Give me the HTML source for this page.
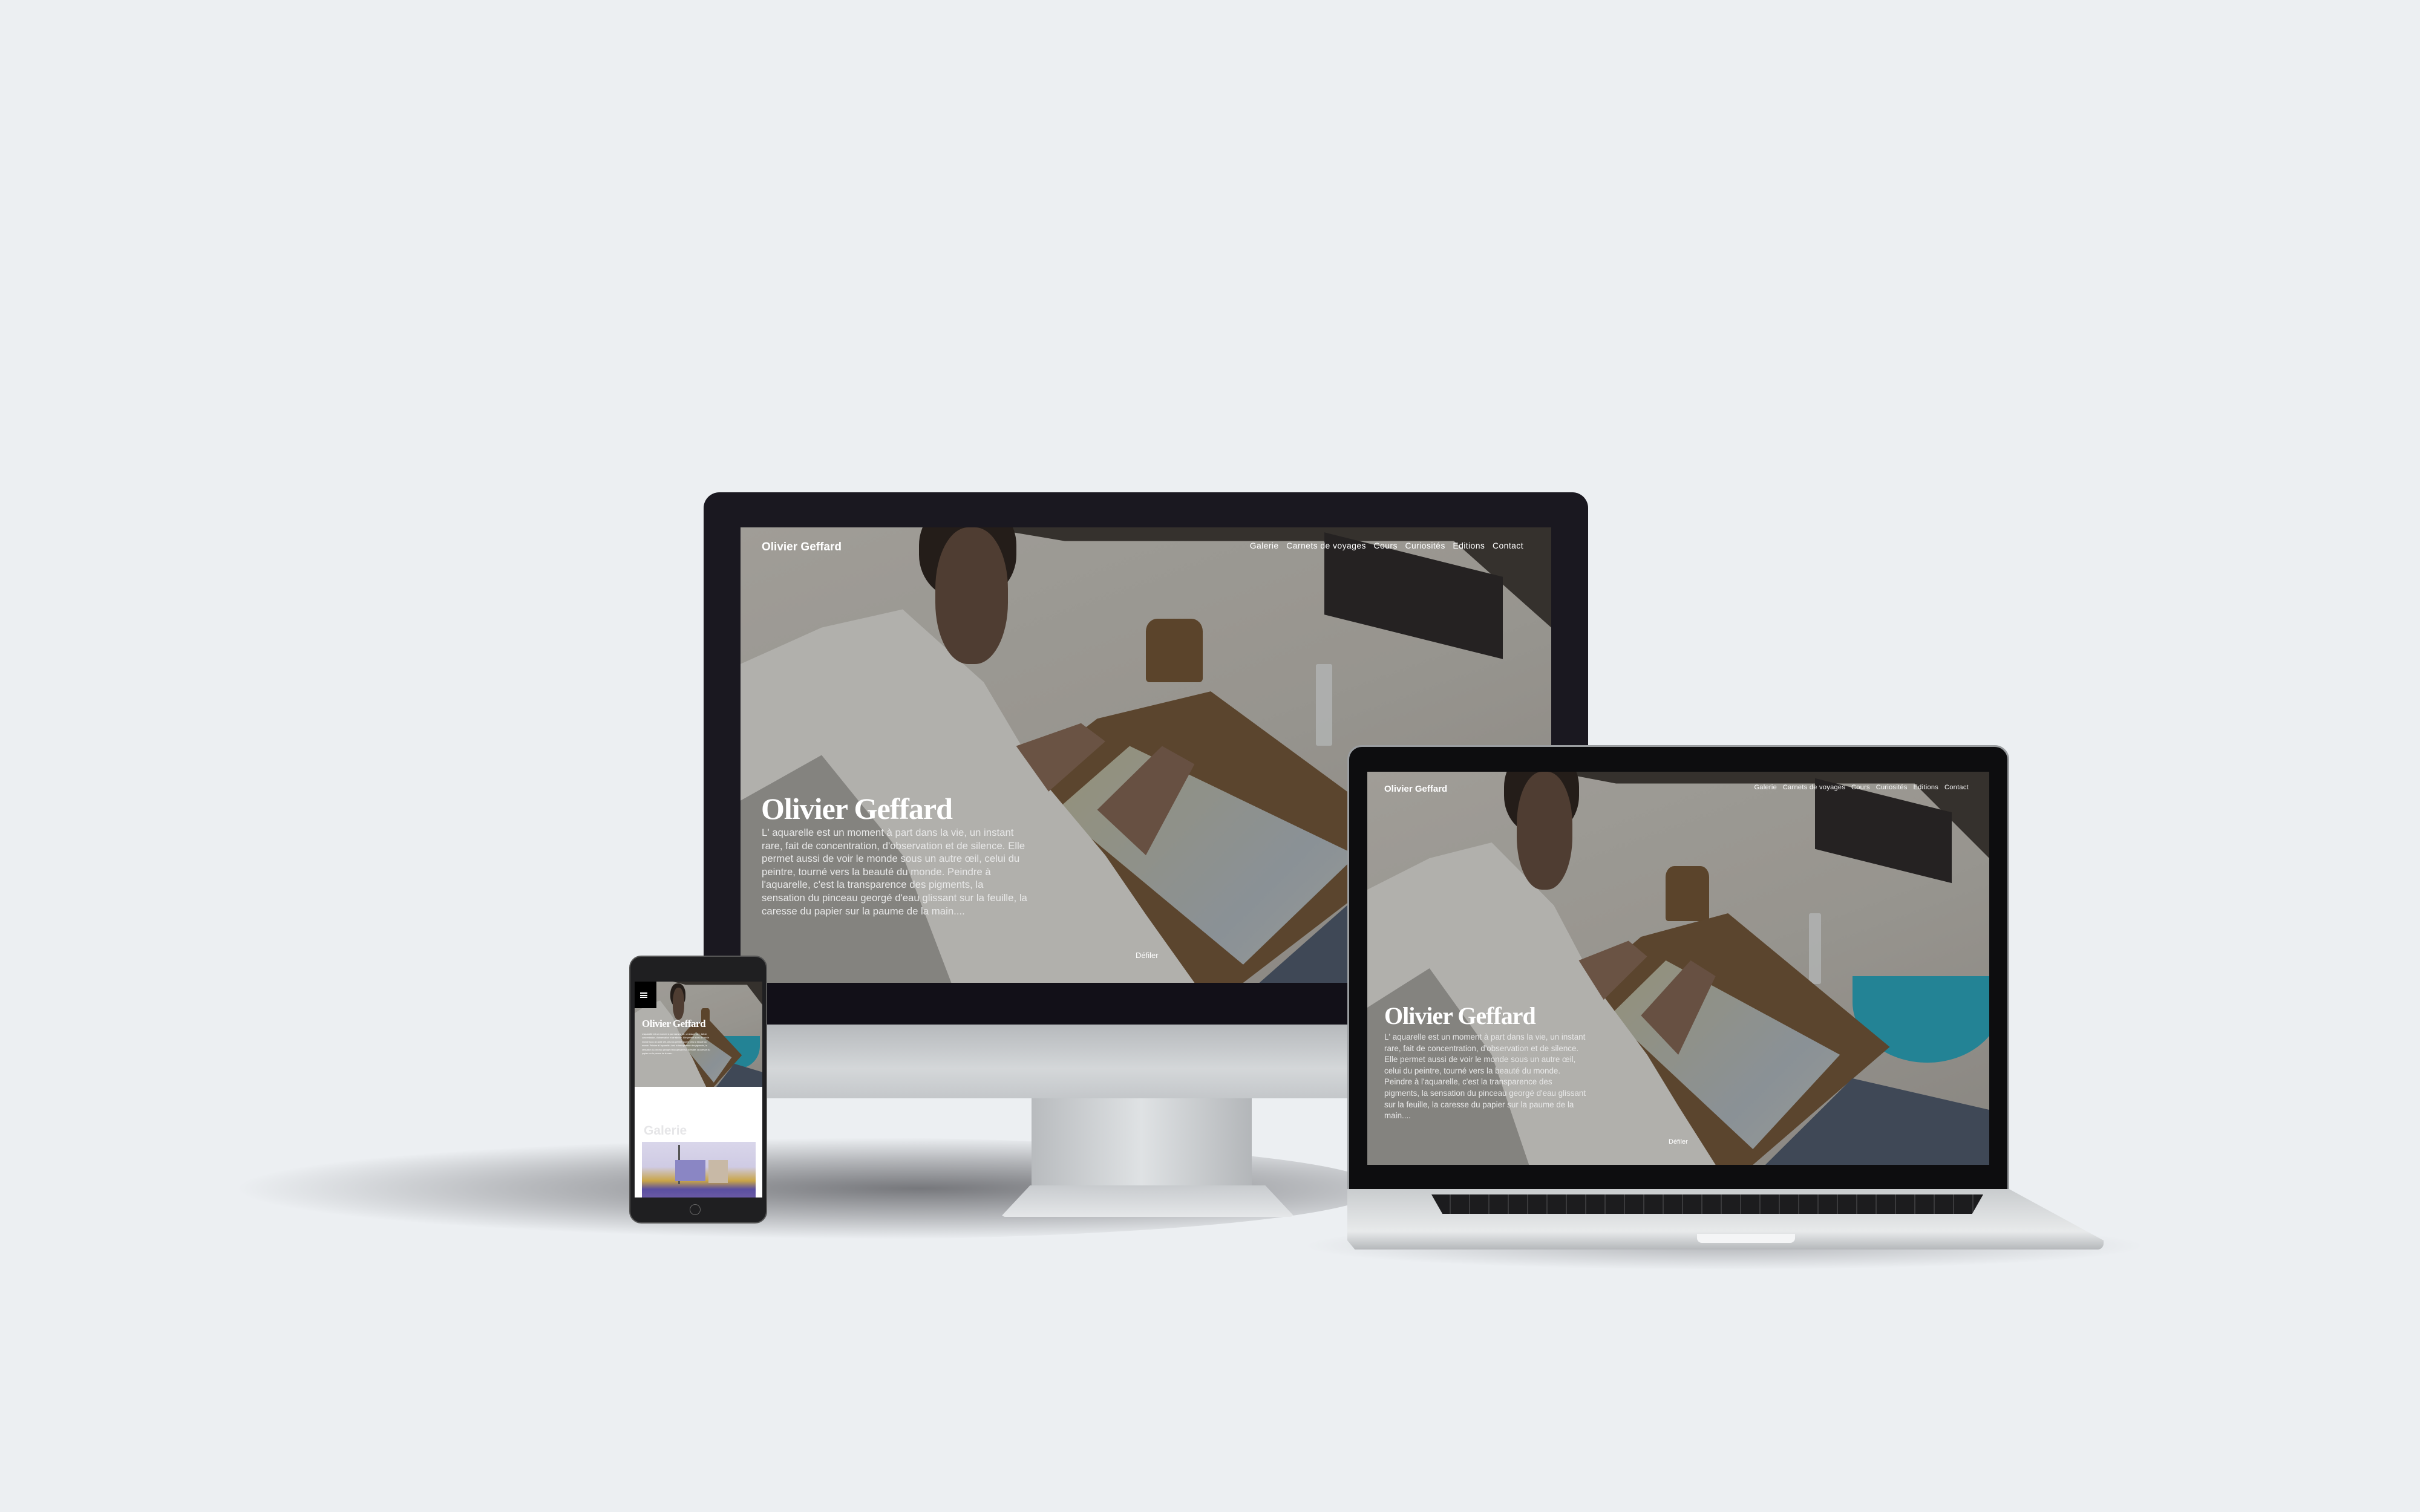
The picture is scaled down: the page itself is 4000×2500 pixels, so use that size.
<!DOCTYPE html>
<html><head><meta charset="utf-8"><style>
*{margin:0;padding:0;box-sizing:border-box}
body{width:4000px;height:2500px;background:#eceff2;position:relative;overflow:hidden;font-family:"Liberation Sans",sans-serif}
.abs{position:absolute}
.scene{position:absolute;overflow:hidden;background:linear-gradient(160deg,#bcb9b2 0%,#b2afa8 50%,#a19e98 100%)}
.scene>div{position:absolute}
.wall{left:0;top:0;width:100%;height:100%;background:#3f3a35;clip-path:polygon(0 0,100% 0,100% 22%,88% 3%,40% 3%,30% 0)}
.chair{left:72%;top:6%;width:22%;height:18%;background:#2c2928;transform:skewY(14deg)}
.shirt{left:0;top:0;width:100%;height:100%;background:#d0cfcb;clip-path:polygon(0 30%,10% 22%,20% 18%,30% 34%,37% 55%,45% 72%,50% 85%,56% 100%,0 100%)}
.shirtsh{left:0;top:0;width:100%;height:100%;background:#9c9a96;clip-path:polygon(0 60%,10% 50%,20% 72%,26% 100%,0 100%)}
.head{left:24%;top:0%;width:9%;height:30%;border-radius:45%;background:#5d483b}
.hair{left:22%;top:-6%;width:12%;height:22%;border-radius:45%;background:#2b231e}
.board{left:0;top:0;width:100%;height:100%;background:#6c5237;clip-path:polygon(33% 57%,44% 42%,58% 36%,84% 70%,62% 100%,40% 100%)}
.paper{left:0;top:0;width:100%;height:100%;background:linear-gradient(135deg,#c2aa62 0%,#b0ab8c 40%,#a3abb1 70%,#c0beb4 100%);clip-path:polygon(39% 62%,48% 48%,76% 72%,62% 96%)}
.arm{left:0;top:0;width:100%;height:100%;background:#7d6250;clip-path:polygon(34% 48%,42% 43%,45% 47%,38% 58%)}
.arm2{left:0;top:0;width:100%;height:100%;background:#7a5f4e;clip-path:polygon(44% 62%,52% 48%,56% 52%,50% 72%)}
.block{left:50%;top:20%;width:7%;height:14%;background:#6b5033;border-radius:20% 20% 6% 6%}
.bottle{left:71%;top:30%;width:2%;height:18%;background:rgba(215,218,220,.7);border-radius:3px}
.bowl{left:76%;top:48%;width:26%;height:26%;border-radius:0 0 50% 50%/0 0 70% 70%;background:#2a9bb0}
.mat{left:0;top:0;width:100%;height:100%;background:#4a5566;clip-path:polygon(64% 100%,78% 78%,100% 86%,100% 100%)}
.dark{left:0;top:0;width:100%;height:100%;background:rgba(0,0,0,.15)}
.nav{position:absolute;color:#fff;white-space:nowrap}
.nav span{margin-left:.9em}
.logo{position:absolute;color:#fff;font-weight:bold;white-space:nowrap}
.title{position:absolute;color:#fff;font-family:"Liberation Serif",serif;font-weight:bold;white-space:nowrap;letter-spacing:-1px}
.para{position:absolute;color:#e8e8e8;font-weight:300}
.def{position:absolute;color:#fff;white-space:nowrap}
</style></head><body>

<div class="abs" style="left:380px;top:1880px;width:1900px;height:170px;border-radius:50%;background:radial-gradient(ellipse at 60% 50%,rgba(40,40,45,.6) 0%,rgba(60,60,65,.3) 40%,rgba(236,239,242,0) 70%)"></div>
<div class="abs" style="left:2150px;top:2020px;width:1400px;height:80px;border-radius:50%;background:radial-gradient(ellipse,rgba(80,80,85,.35),rgba(236,239,242,0) 70%)"></div>

<div class="abs" style="left:1705px;top:1810px;width:364px;height:200px;background:linear-gradient(90deg,#b8bbbe,#dfe2e4 50%,#b3b6b9);clip-path:polygon(0 0,100% 0,100% 85%,0 85%)"></div>
<div class="abs" style="left:1654px;top:1960px;width:486px;height:52px;background:linear-gradient(#c8cbce,#e5e7e9);clip-path:polygon(10% 0,90% 0,100% 100%,0 100%);border-radius:0 0 8px 8px"></div>
<div class="abs" style="left:1163px;top:814px;width:1462px;height:1002px;border-radius:26px 26px 8px 8px;background:#1a1820"></div>
<div class="abs" style="left:1163px;top:1694px;width:1462px;height:122px;border-radius:0 0 10px 10px;background:linear-gradient(#b6b9bc,#d4d7d9 60%,#c4c7ca)"></div>
<div class="abs" style="left:1163px;top:1625px;width:1462px;height:69px;background:#121018"></div>

<div class="scene" style="left:1224px;top:872px;width:1340px;height:753px">
<div class="wall"></div><div class="chair"></div><div class="block"></div><div class="bottle"></div>
<div class="bowl" style="left:92%;top:92%;width:20%"></div>
<div class="board"></div><div class="paper"></div><div class="mat"></div>
<div class="shirt"></div><div class="shirtsh"></div><div class="arm"></div><div class="arm2"></div>
<div class="hair"></div><div class="head"></div>
<div class="dark"></div>
<div class="logo" style="left:35px;top:22px;font-size:19px">Olivier Geffard</div>
<div class="nav" style="right:46px;top:22px;font-size:14px;letter-spacing:.4px"><span>Galerie</span><span>Carnets de voyages</span><span>Cours</span><span>Curiosités</span><span>Editions</span><span>Contact</span></div>
<div class="title" style="left:34px;top:436px;font-size:50px">Olivier Geffard</div>
<div class="para" style="left:35px;top:494px;width:440px;font-size:16.8px;line-height:21.6px">L' aquarelle est un moment à part dans la vie, un instant rare, fait de concentration, d'observation et de silence. Elle permet aussi de voir le monde sous un autre œil, celui du peintre, tourné vers la beauté du monde. Peindre à l'aquarelle, c'est la transparence des pigments, la sensation du pinceau georgé d'eau glissant sur la feuille, la caresse du papier sur la paume de la main....</div>
<div class="def" style="left:653px;top:700px;font-size:13px">Défiler</div>
</div>

<div class="abs" style="left:2227px;top:1232px;width:1094px;height:740px;border-radius:24px 24px 0 0;background:#0d0d0f;border:3px solid #9a9da0"></div>
<div class="scene" style="left:2260px;top:1276px;width:1028px;height:650px">
<div class="wall"></div><div class="chair"></div><div class="block" style="left:48%;top:24%"></div><div class="bottle" style="top:36%"></div>
<div class="bowl" style="top:52%;left:78%;width:24%;height:22%"></div>
<div class="board"></div><div class="paper"></div><div class="mat"></div>
<div class="shirt"></div><div class="shirtsh"></div><div class="arm"></div><div class="arm2"></div>
<div class="hair"></div><div class="head"></div>
<div class="dark"></div>
<div class="logo" style="left:28px;top:20px;font-size:15px">Olivier Geffard</div>
<div class="nav" style="right:34px;top:20px;font-size:11px;letter-spacing:.3px"><span>Galerie</span><span>Carnets de voyages</span><span>Cours</span><span>Curiosités</span><span>Editions</span><span>Contact</span></div>
<div class="title" style="left:28px;top:380px;font-size:40px">Olivier Geffard</div>
<div class="para" style="left:28px;top:430px;width:335px;font-size:13.4px;line-height:18.6px">L' aquarelle est un moment à part dans la vie, un instant rare, fait de concentration, d'observation et de silence. Elle permet aussi de voir le monde sous un autre œil, celui du peintre, tourné vers la beauté du monde. Peindre à l'aquarelle, c'est la transparence des pigments, la sensation du pinceau georgé d'eau glissant sur la feuille, la caresse du papier sur la paume de la main....</div>
<div class="def" style="left:498px;top:606px;font-size:11px">Défiler</div>
</div>
<div class="abs" style="left:2227px;top:1966px;width:1250px;height:100px;background:linear-gradient(#c9ccce,#e8eaeb 70%,#b5b8bb);clip-path:polygon(0 0,87.5% 0,100% 85%,100% 100%,1% 100%,0 85%);border-radius:0 0 10px 10px"></div>
<div class="abs" style="left:2366px;top:1975px;width:912px;height:32px;background:repeating-linear-gradient(90deg,#1c1c1e 0 30px,#3a3a3c 30px 32px);clip-path:polygon(0 0,100% 0,98% 100%,2% 100%)"></div>
<div class="abs" style="left:2805px;top:2040px;width:162px;height:15px;background:#f4f5f6;border-radius:0 0 8px 8px"></div>

<div class="abs" style="left:1040px;top:1580px;width:228px;height:443px;border-radius:20px;background:#1f1f21;border:2px solid #555"></div>
<div class="abs" style="left:1049px;top:1623px;width:211px;height:357px;background:#fff;overflow:hidden">
 <div class="scene" style="left:0;top:0;width:211px;height:174px">
  <div class="wall"></div><div class="block" style="left:52%;top:25%"></div>
  <div class="bowl" style="top:52%;left:66%;width:32%;height:30%"></div>
  <div class="board"></div><div class="paper"></div><div class="mat"></div>
  <div class="shirt"></div><div class="hair" style="left:28%;top:2%"></div><div class="head" style="left:30%;top:6%"></div>
  <div class="dark"></div>
  <div class="abs" style="left:0;top:0;width:36px;height:44px;background:#000"></div>
  <div class="abs" style="left:9px;top:18px;width:12px;height:9px;border-top:2px solid #fff;border-bottom:2px solid #fff"></div>
  <div class="abs" style="left:9px;top:22px;width:12px;height:2px;background:#fff"></div>
  <div class="title" style="left:12px;top:60px;font-size:17px;letter-spacing:-.5px">Olivier Geffard</div>
  <div class="para" style="left:12px;top:84px;width:115px;font-size:3.6px;line-height:6.4px;color:#fff">L'aquarelle est un moment à part dans la vie, un instant rare, fait de concentration, d'observation et de silence. Elle permet aussi de voir le monde sous un autre œil, celui du peintre, tourné vers la beauté du monde. Peindre à l'aquarelle, c'est la transparence des pigments, la sensation du pinceau georgé d'eau glissant sur la feuille, la caresse du papier sur la paume de la main...</div>
 </div>
 <div class="abs" style="left:15px;top:235px;font-size:21px;font-weight:bold;color:#e6e6e8">Galerie</div>
 <div class="abs" style="left:12px;top:265px;width:188px;height:92px;background:linear-gradient(#d9d6ea 0%,#cfcbe4 45%,#c9a548 70%,#5a4fa0 85%,#6a5aa6 100%)">
  <div class="abs" style="left:60px;top:5px;width:3px;height:65px;background:#555"></div>
  <div class="abs" style="left:55px;top:30px;width:50px;height:35px;background:#8a86c4"></div>
  <div class="abs" style="left:110px;top:30px;width:32px;height:38px;background:#c8b9a6"></div>
 </div>
</div>
<div class="abs" style="left:1140px;top:1991px;width:18px;height:18px;border-radius:50%;border:1.5px solid #666"></div>

</body></html>
